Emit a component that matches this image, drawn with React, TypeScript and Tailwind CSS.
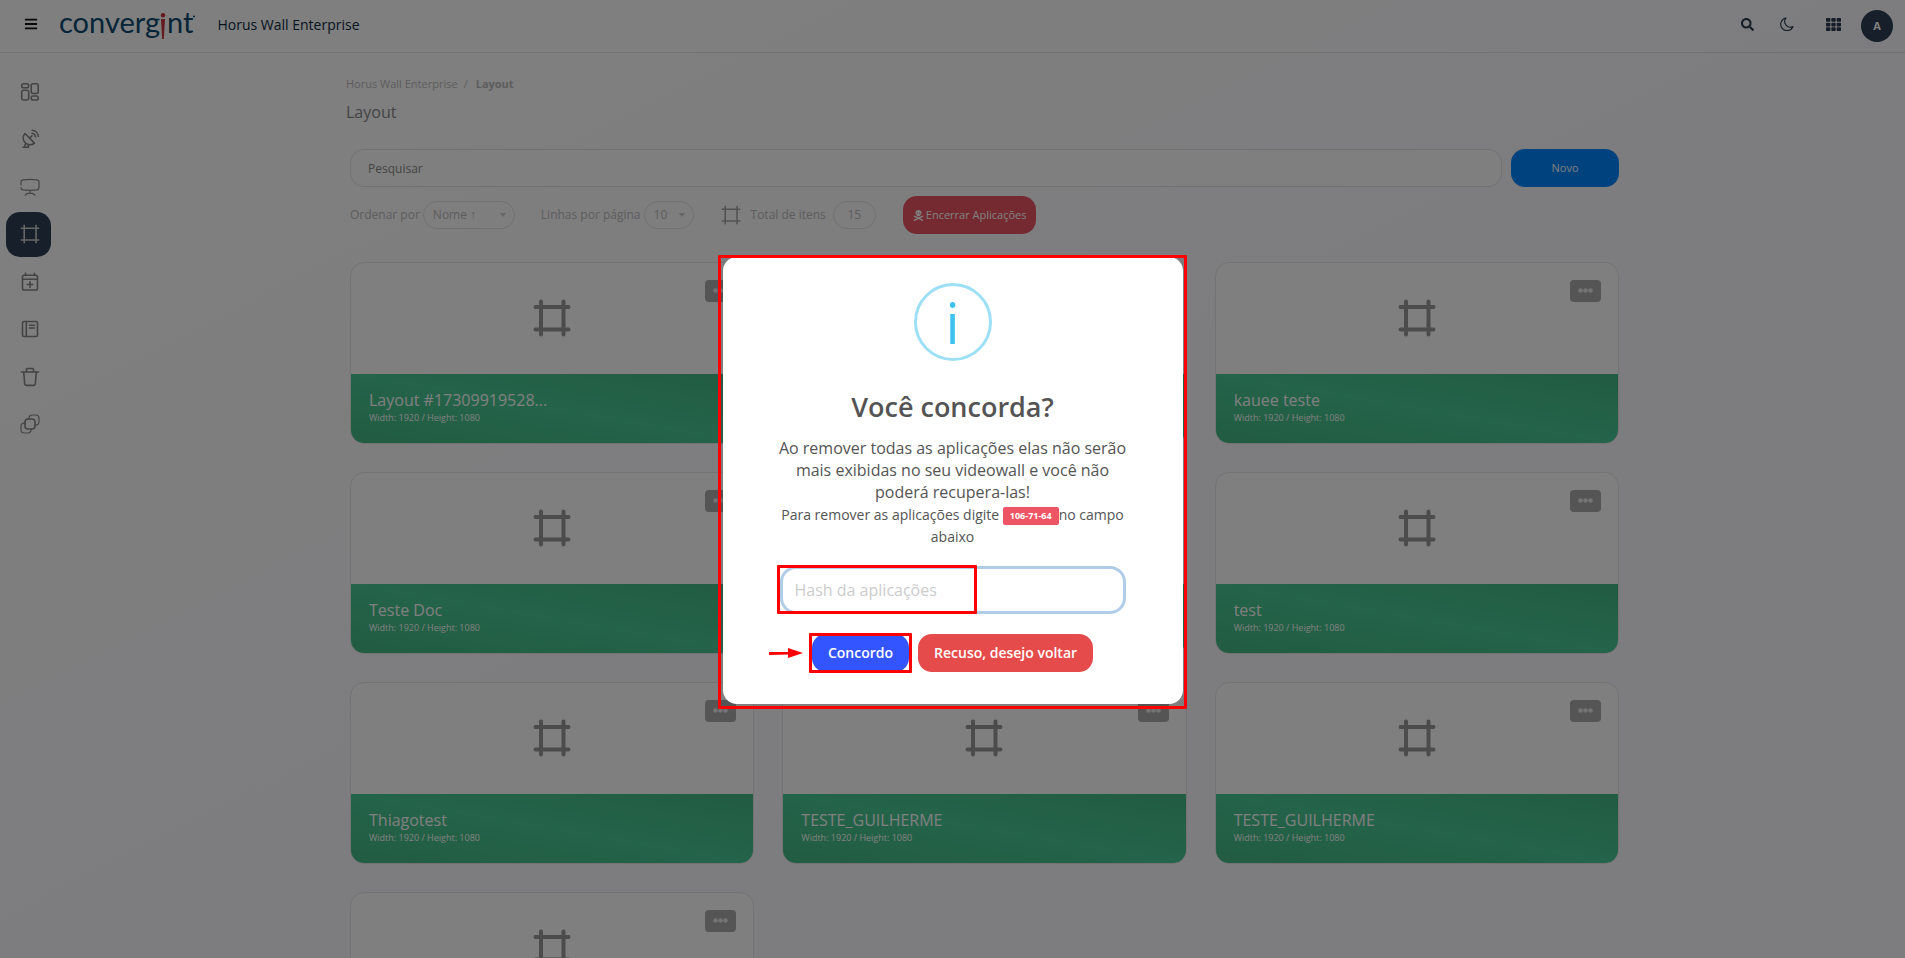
import type { ReactNode } from 'react';
import { FaBars, FaSearch, FaSkullCrossbones, FaTh } from 'react-icons/fa';

// ============================================================================
// Layout list with the "close all applications" confirmation on top of it.
// ============================================================================

type LayoutItem = {
  id: number;
  name?: string;
  size?: string;
};

const SIZE = 'Width: 1920 / Height: 1080';

const LAYOUTS: LayoutItem[] = [
  { id: 1, name: 'Layout #17309919528...', size: SIZE },
  { id: 2 },
  { id: 3, name: 'kauee teste', size: SIZE },
  { id: 4, name: 'Teste Doc', size: SIZE },
  { id: 5 },
  { id: 6, name: 'test', size: SIZE },
  { id: 7, name: 'Thiagotest', size: SIZE },
  { id: 8, name: 'TESTE_GUILHERME', size: SIZE },
  { id: 9, name: 'TESTE_GUILHERME', size: SIZE },
  { id: 10 },
];

function Icon({ children, className = 'size-5' }: { children: ReactNode; className?: string }) {
  return (
    <svg
      viewBox="0 0 20 20"
      className={className}
      fill="none"
      stroke="currentColor"
      strokeWidth={1.6}
      strokeLinecap="round"
      strokeLinejoin="round"
      aria-hidden="true"
    >
      {children}
    </svg>
  );
}

function FrameIcon({ className, stroke = 4 }: { className?: string; stroke?: number }) {
  return (
    <svg
      viewBox="0 0 38 38"
      className={className}
      fill="none"
      stroke="currentColor"
      strokeWidth={stroke}
      strokeLinecap="round"
      aria-hidden="true"
    >
      <path d="M8 2.5v33M30.500 2.500v33M2.500 8h33M2.500 30.500h33" />
    </svg>
  );
}

const NAV: { label: string; icon: ReactNode; active?: boolean }[] = [
  {
    label: 'Dashboard',
    icon: (
      <Icon>
        <rect x="1.700" y="1.700" width="7" height="4" rx="1.800" />
        <rect x="1.700" y="8.200" width="7" height="9.800" rx="2" />
        <rect x="11.200" y="1.700" width="7" height="9.800" rx="2" />
        <rect x="11.200" y="14" width="7" height="4" rx="1.800" />
      </Icon>
    ),
  },
  {
    label: 'Fontes',
    icon: (
      <Icon>
        <path d="M5 4.500c-2.600 3-2.300 6.800.2 9.300s6.500 2.600 9.300.3z" />
        <path d="M9.800 9.300l2.200-2.500M5.800 14.500l-1.600 3.700M3 18.300h5.500M8 15.500l.5 2.800" />
        <path d="M12 4.300c1.800.2 3.200 1.600 3.500 3.500M12.200 1.300c3.300.2 5.900 2.800 6.200 6.200" />
      </Icon>
    ),
  },
  {
    label: 'Displays',
    icon: (
      <Icon>
        <path d="M1 8V5.200c0-1.500.7-2.200 2-2.300 4.600-.6 9.400-.6 14 0 1.300.1 2 .8 2 2.300v5.300c0 1.500-.7 2.200-2 2.400-4.600.6-9.400.6-14 0-1.300-.2-2-.9-2-2.400" strokeWidth={1.2} />
        <path d="M10 13.500v2.500M5 18.200c1-1.300 2.800-2 5-2s4 .7 5 2" strokeWidth={1.2} />
      </Icon>
    ),
  },
  { label: 'Layout', icon: <FrameIcon className="size-5" stroke={3} />, active: true },
  {
    label: 'Agenda',
    icon: (
      <Icon>
        <rect x="2.500" y="3.200" width="15" height="14.800" rx="1.800" />
        <path d="M2.500 7.200h15M5.500 1.200v2M14.500 1.200v2M10 9.800v5.400M7.300 12.500h5.400" />
      </Icon>
    ),
  },
  {
    label: 'Catálogo',
    icon: (
      <Icon>
        <rect x="2.500" y="2.500" width="15" height="15" rx="1.500" />
        <path d="M6.300 2.500v15M9.500 6.300h5M9.500 9h5" />
      </Icon>
    ),
  },
  {
    label: 'Lixeira',
    icon: (
      <Icon>
        <path d="M1.500 5h17M6.500 5V2.300c0-.5.3-.8.8-.8h5.400c.5 0 .8.300.8.800V5M3.700 5l1 12c.1.900.6 1.400 1.500 1.400h7.600c.9 0 1.400-.5 1.500-1.400l1-12" />
      </Icon>
    ),
  },
  {
    label: 'Cópias',
    icon: (
      <Icon>
        <rect x="5" y="5" width="10" height="10" rx="3" />
        <path
          d="M8.800 5c0-2.500 1.300-4 3.500-4h3.500C18 1 19 2.200 19 4.200v3.600c0 2-1.400 3.400-4 3.400M11.200 15c0 2.500-1.300 4-3.500 4H4.200C2 19 1 17.800 1 15.800v-3.600c0-2 1.400-3.400 4-3.400"
          strokeWidth={1.2}
        />
      </Icon>
    ),
  },
];

export default function App() {
  return (
    <div className="h-screen overflow-hidden bg-white bg-linear-to-br from-white from-10% via-[#fbfaff] via-50% to-[#fbfaff] font-['Open_Sans',sans-serif] text-[#888]">
      <Header />
      <div className="flex">
        <Sidebar />
        <main className="min-w-0 flex-1">
          <div className="mx-auto max-w-[1277px] pt-[23px]">
            <nav aria-label="breadcrumb" className="flex gap-1.5 text-[11px] leading-4 text-[#bbb]">
              <a href="#">Horus Wall Enterprise</a>
              <span>/</span>
              <span className="ml-0.5 font-bold">Layout</span>
            </nav>
            <h1 className="mt-2 text-base leading-6">Layout</h1>
            <div className="mt-[25px] px-1">
              <Toolbar />
              <div className="mt-7 grid grid-cols-3 gap-7">
                {LAYOUTS.map((l) => (
                  <LayoutCard key={l.id} item={l} />
                ))}
              </div>
            </div>
          </div>
        </main>
      </div>
      <ConfirmModal />
    </div>
  );
}

function Header() {
  return (
    <header className="flex h-[53px] items-center border-b border-[#e6e6e6] pb-1 pl-6 pr-3 text-[#0e2a3e]">
      <button type="button" aria-label="Menu" className="text-sm text-[#111]">
        <FaBars />
      </button>
      <Logo />
      <span className="ml-[22px] text-[14px] font-medium">Horus Wall Enterprise</span>
      <div className="ml-auto flex items-center text-[#2b3a50]">
        <button type="button" aria-label="Buscar" className="mr-[26px] text-[13px]">
          <FaSearch />
        </button>
        <button type="button" aria-label="Tema" className="mr-8">
          <Icon className="size-3.5">
            <path d="M8.500 1.500A9 9 0 1 0 18.500 13.500 8 8 0 0 1 8.500 1.500z" />
          </Icon>
        </button>
        <button type="button" aria-label="Aplicativos" className="mr-5 text-[15px]">
          <FaTh />
        </button>
        <button
          type="button"
          className="mt-1 grid size-8 place-items-center rounded-full bg-[#2f4054] text-[11px] font-bold text-white"
        >
          A
        </button>
      </div>
    </header>
  );
}

function Logo() {
  return (
    <a
      href="#"
      aria-label="convergint"
      className="mb-1 ml-[21px] flex items-baseline font-['Lato',sans-serif] text-[29px] leading-8 text-[#0d4a70]"
    >
      <span>converg</span>
      {/* The red "i" tapers down like a pin */}
      <svg viewBox="0 0 6 26" className="mr-px h-[26px] w-1.5 translate-y-1.5" fill="#c8323c" aria-hidden="true">
        <circle cx="3" cy="2.200" r="2.200" />
        <path d="M1 6h4l-1.200 20H2.200z" />
      </svg>
      <span>nt</span>
      <svg viewBox="0 0 2 18" className="h-[18px] w-0.5" fill="currentColor" aria-hidden="true">
        <circle cx="1" cy="1.500" r="1" />
      </svg>
    </a>
  );
}

function Sidebar() {
  return (
    <nav className="flex w-16 shrink-0 flex-col pl-1.5 pt-4">
      <ul className="flex min-h-[378px] flex-col justify-between">
        {NAV.map((n) => (
          <li key={n.label}>
            <a
              href="#"
              aria-label={n.label}
              className={`grid size-[45px] place-items-center rounded-[14px] pl-0.5 ${
                n.active ? 'bg-[#2f4054] text-[#ccc]' : 'text-[#888]'
              }`}
            >
              {n.icon}
            </a>
          </li>
        ))}
      </ul>
    </nav>
  );
}

function PillSelect({ id, options, className }: { id: string; options: string[]; className: string }) {
  return (
    <div className="relative">
      <select
        id={id}
        className={`h-7 appearance-none rounded-full border border-[#e3e3e3] bg-transparent pl-[9px] text-xs ${className}`}
      >
        {options.map((o) => (
          <option key={o}>{o}</option>
        ))}
      </select>
      <svg viewBox="0 0 8 5" className="pointer-events-none absolute right-2 top-3 h-1 w-2 fill-[#ccc]" aria-hidden="true">
        <path d="M0 0h8L4 5z" />
      </svg>
    </div>
  );
}

function Toolbar() {
  return (
    <>
      <div className="flex gap-[9px]">
        <input
          type="search"
          aria-label="Pesquisar"
          placeholder="Pesquisar"
          className="h-[38px] min-w-0 flex-1 rounded-[14px] border border-[#e3e3e3] bg-white px-[17px] text-xs placeholder:text-[#888]"
        />
        <button type="button" className="h-[38px] w-[108px] rounded-[14px] bg-[#0084fc] text-[11px] text-white">
          Novo
        </button>
      </div>
      <div className="mt-[9px] flex items-center text-xs text-[#bbb]">
        <label htmlFor="order" className="mr-[3px]">
          Ordenar por
        </label>
        <PillSelect id="order" options={['Nome ↑', 'Nome ↓']} className="w-[92px]" />
        <label htmlFor="rows" className="ml-[26px] mr-[3px]">
          Linhas por página
        </label>
        <PillSelect id="rows" options={['10', '25', '50']} className="w-[50px]" />
        <FrameIcon className="ml-[27px] size-5 text-[#a5a5a5]" stroke={3} />
        <span className="ml-2.5">Total de itens</span>
        <span className="ml-[7px] grid h-7 w-[43px] place-items-center rounded-full border border-[#e3e3e3]">15</span>
        <button
          type="button"
          className="ml-[27px] flex h-[38px] items-center gap-0.5 rounded-[14px] bg-[#ea5462] px-2.5 text-[11px] text-white"
        >
          <FaSkullCrossbones className="text-[11px]" />
          Encerrar Aplicações
        </button>
      </div>
    </>
  );
}

function LayoutCard({ item }: { item: LayoutItem }) {
  return (
    <article className="relative overflow-hidden rounded-[14px] border border-[#e6e6e8] bg-white">
      <div className="grid h-[111px] place-items-center pb-0.5">
        <FrameIcon className="size-[38px] text-[#989898]" />
      </div>
      <button
        type="button"
        aria-label="Opções"
        className="absolute right-[17px] top-[17px] flex h-[22px] w-[31px] items-center justify-center rounded-sm bg-[#ababab] pb-0.5"
      >
        <svg viewBox="0 0 15 5" className="h-[5px] w-[15px] fill-[#e8e8e8]" aria-hidden="true">
          <circle cx="2.500" cy="2.500" r="2.300" />
          <circle cx="7.500" cy="2.500" r="2.300" />
          <circle cx="12.500" cy="2.500" r="2.300" />
        </svg>
      </button>
      <div className="h-[69px] bg-linear-to-tr from-[#44b884] via-[#48c894] to-[#44b884] px-[18px] pt-4 text-white">
        <h2 className="text-base leading-5">{item.name}</h2>
        <p className="text-[9px] leading-4">{item.size}</p>
      </div>
    </article>
  );
}

function ConfirmModal() {
  return (
    <div className="fixed inset-0 grid place-items-center bg-black/50">
      <div
        role="dialog"
        aria-modal="true"
        aria-labelledby="confirm-title"
        className="relative mt-[3px] w-[460px] rounded-[14px] bg-white px-[50px] pb-8 pt-[26px] text-center text-[#545454]"
      >
        <Highlight className="-bottom-[5px] -left-[5px] -right-1 -top-0.5" />
        <div className="mx-auto grid size-[78px] place-items-center rounded-full border-3 border-[#9de0f6] text-[56px] leading-none text-[#3fc3ee]">
          i
        </div>
        <h2 id="confirm-title" className="mt-7 text-[27px] font-semibold leading-9">
          Você concorda?
        </h2>
        <p className="mt-3 text-base leading-[22px]">
          Ao remover todas as aplicações elas não serão mais exibidas no seu videowall e você não poderá recupera-las!
        </p>
        <p className="pt-px text-sm leading-[22px]">
          Para remover as aplicações digite{' '}
          <span className="inline-block rounded-xs bg-[#ed5565] px-[7px] align-middle text-[9px] font-bold leading-[18px] text-white">
            106-71-64
          </span>
          no campo abaixo
        </p>
        <div className="relative mx-[7px] mt-[18px]">
          <input
            type="text"
            aria-label="Hash da aplicações"
            placeholder="Hash da aplicações"
            className="h-12 w-full rounded-[16px] border-3 border-[#b0cde8] px-3 text-base placeholder:text-[#ccc]"
          />
          <Highlight className="-left-[3px] -top-px bottom-0 w-[200px]" />
        </div>
        <div className="mt-5 flex justify-center gap-[9px] text-sm font-semibold text-white">
          <div className="relative">
            <button type="button" className="h-[38px] rounded-[14px] bg-[#3355ff] px-4">
              Concordo
            </button>
            <Highlight className="-inset-x-[3px] -inset-y-px" />
            <svg viewBox="0 0 36 10" className="absolute right-full top-3.5 mr-2 h-2.5 w-9" fill="#f00" aria-hidden="true">
              <path d="M1 4h19V0l15 5-15 5V6.500L1 7z" />
            </svg>
          </div>
          <button type="button" className="h-[38px] rounded-[14px] bg-[#e64b4b] px-4">
            Recuso, desejo voltar
          </button>
        </div>
      </div>
    </div>
  );
}

// Red outline drawn around the part the user has to look at
function Highlight({ className }: { className: string }) {
  return <div className={`pointer-events-none absolute rounded-[1px] border-3 border-[#f00] ${className}`} />;
}
